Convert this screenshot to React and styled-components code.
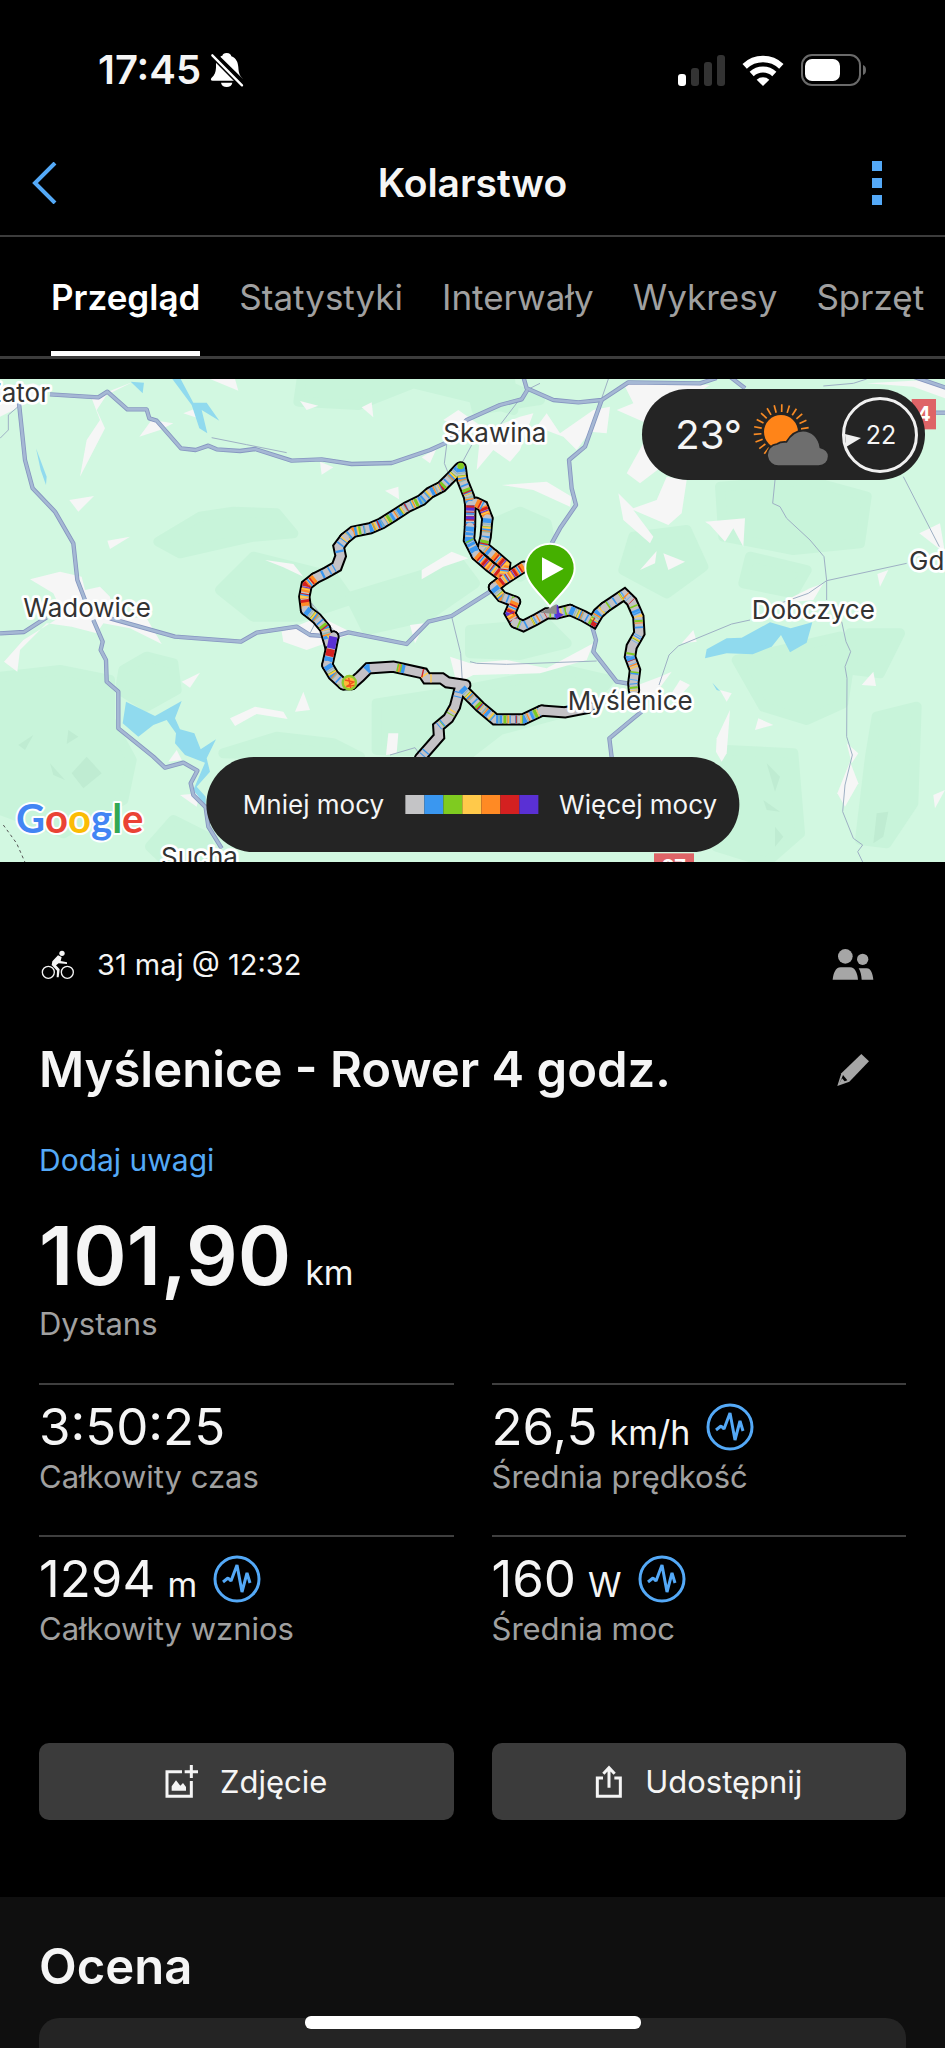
import React, { useState } from 'react';
import styled, { createGlobalStyle } from 'styled-components';

const GlobalStyle = createGlobalStyle`
  * {
    box-sizing: border-box;
  }

  body {
    margin: 0;
    background-color: #000;
    color: #f5f5f5;
    font-family: Inter, 'Liberation Sans', sans-serif;
  }

  button {
    font-family: inherit;
    cursor: pointer;
  }
`;

const Page = styled.div`
  display: flex;
  flex-direction: column;
  height: 100vh;
  overflow: hidden;

  > * {
    flex-shrink: 0;
  }
`;

const StatusBar = styled.div`
  display: flex;
  justify-content: space-between;
  align-items: center;
  padding: 46px 78px 40px 98px;
`;

const StatusGroup = styled.div`
  display: flex;
  align-items: center;
  gap: ${props => props.$gap};
`;

const Clock = styled.span`
  font-size: 40px;
  line-height: 48px;
  font-weight: 600;
`;

const Header = styled.header`
  display: grid;
  grid-template-columns: 1fr auto 1fr;
  align-items: center;
  padding: 0 23px 4px;
  height: 103px;
  border-bottom: 2px solid #3c3c3c;
`;

const HeaderTitle = styled.h1`
  margin: 0;
  font-size: 39px;
  line-height: 48px;
  font-weight: 600;
  text-align: center;
`;

const IconButton = styled.button`
  display: flex;
  padding: 8px;
  border: none;
  background: none;
  color: ${props => props.$color};
`;

const MenuButton = styled(IconButton)`
  justify-self: end;
  margin-right: 32px;
`;

const Tabs = styled.nav`
  display: flex;
  gap: 39px;
  padding: 38px 24px 0 51px;
  overflow: hidden;
  border-bottom: 3px solid #3c3c3c;
`;

const Tab = styled.button`
  padding: 0 0 32px;
  border: none;
  border-bottom: 5px solid ${props => (props.$active ? '#fff' : 'transparent')};
  background: none;
  color: ${props => (props.$active ? '#fff' : '#a0a0a0')};
  font-size: 35px;
  line-height: 44px;
  font-weight: ${props => (props.$active ? 600 : 400)};
  white-space: nowrap;
`;

const MapCard = styled.section`
  position: relative;
  margin-top: 20px;
  overflow: hidden;
`;

const MapSvg = styled.svg`
  display: block;
  width: 100%;
  height: auto;
`;

const Place = styled.text`
  font-family: Inter, sans-serif;
  font-size: 78px;
  fill: #333;
  stroke: #fff;
  stroke-width: 16px;
  stroke-linejoin: round;
  paint-order: stroke;
`;

const Shield = styled.text`
  font-family: Inter, sans-serif;
  font-size: 60px;
  font-weight: 700;
  fill: #fff;
`;

const GoogleLogo = styled.text`
  font-family: Lato, sans-serif;
  font-size: 120px;
  font-weight: 700;
  stroke: #fff;
  stroke-width: 12px;
  stroke-linejoin: round;
  paint-order: stroke;
`;

const Pill = styled.div`
  position: absolute;
  display: flex;
  align-items: center;
  border-radius: 48px;
  background-color: #242424;
`;

const WeatherPill = styled(Pill)`
  top: 10px;
  right: 20px;
  height: 91px;
  padding: 0 7px 0 33px;
`;

const Temperature = styled.span`
  font-size: 40px;
  margin-right: 11px;
`;

const Wind = styled.div`
  position: relative;
  display: flex;
  justify-content: center;
  align-items: center;
  width: 76px;
  height: 76px;
  margin-left: 13px;
  padding-left: 2px;
  border: 3px solid #f0f0f0;
  border-radius: 50%;
  font-size: 25px;

  svg {
    position: absolute;
    left: 0;
    top: 34px;
  }
`;

const LegendPill = styled(Pill)`
  left: 50%;
  bottom: 10px;
  height: 95px;
  padding: 0 22px 0 37px;
  gap: 21px;
  transform: translateX(-50%);
  font-size: 26px;
  white-space: nowrap;
`;

const Scale = styled.div`
  display: flex;
`;

const Swatch = styled.span`
  width: 19px;
  height: 19px;
  background-color: ${props => props.$color};
`;

const Activity = styled.main`
  padding: 79px 39px 77px;
`;

const Row = styled.div`
  display: flex;
  justify-content: space-between;
  align-items: center;
  padding-right: 24px;
`;

const DateText = styled.div`
  display: flex;
  align-items: center;
  gap: 21px;
  height: 40px;
  font-size: 29px;
`;

const Title = styled.h2`
  margin: 0;
  font-size: 49px;
  line-height: 60px;
  font-weight: 600;
`;

const TitleRow = styled(Row)`
  margin-top: 52px;
`;

const NotesLink = styled.a`
  display: block;
  width: fit-content;
  margin-top: 40px;
  color: #54a9f7;
  font-size: 30px;
  line-height: 40px;
  text-decoration: none;
`;

const Distance = styled.div`
  display: flex;
  align-items: baseline;
  gap: 14px;
  margin-top: 28px;
  font-size: 81px;
  line-height: 96px;
  font-weight: 600;
`;

const Label = styled.div`
  color: #a0a0a0;
  font-size: 31px;
  line-height: 40px;
`;

const Unit = styled.span`
  font-size: 34px;
  line-height: 40px;
  font-weight: 400;
`;

const Stats = styled.div`
  display: grid;
  grid-template-columns: 1fr 1fr;
  gap: 38px;
  margin-top: 39px;
`;

const Stat = styled.div`
  padding-top: 12px;
  border-top: 2px solid #3f3f3f;
`;

const StatLine = styled.div`
  display: flex;
  align-items: center;
  gap: 16px;
`;

const Value = styled.div`
  display: flex;
  align-items: baseline;
  gap: 12px;
  font-size: 51px;
  line-height: 60px;
`;

const ChartButton = styled.button`
  display: flex;
  padding: 0;
  border: none;
  background: none;
`;

const Actions = styled.div`
  display: grid;
  grid-template-columns: 1fr 1fr;
  gap: 38px;
  margin-top: 94px;
`;

const ActionButton = styled.button`
  display: flex;
  justify-content: center;
  align-items: center;
  gap: 22px;
  height: 77px;
  border: none;
  border-radius: 10px;
  background-color: #3b3b3b;
  color: #f5f5f5;
  font-size: 31px;
`;

const Rating = styled.section`
  display: flex;
  flex-direction: column;
  flex-grow: 1;
  gap: 21px;
  padding: 40px 39px 0;
  background-color: #0f0f0f;
`;

const RatingCard = styled.div`
  flex: 1;
  min-height: 29px;
  border-radius: 20px 20px 0 0;
  background-color: #242424;
`;

const HomeIndicator = styled.div`
  position: fixed;
  left: 50%;
  bottom: 19px;
  width: 336px;
  height: 13px;
  border-radius: 6px;
  background-color: #fff;
  transform: translateX(-50%);
`;

const tabs = ['Przegląd', 'Statystyki', 'Interwały', 'Wykresy', 'Sprzęt'];

const scale = ['#c4c4c6', '#3a97f0', '#7fcb20', '#ffc94a', '#ff8a24', '#d42020', '#5a30d4'];

const stats = [
  { value: '3:50:25', label: 'Całkowity czas' },
  { value: '26,5', unit: 'km/h', label: 'Średnia prędkość', chart: true },
  { value: '1294', unit: 'm', label: 'Całkowity wznios', chart: true },
  { value: '160', unit: 'W', label: 'Średnia moc', chart: true },
];

// stripes laid over the grey track: [colour, dash pattern, offset]
const calm = [
  ['#3a97f0', '14 38 5 27 3 61', 20],
  ['#5cacf5', '3 19 2 47', 7],
  ['#7fcb20', '6 53 5 41', 50],
  ['#ffc94a', '4 67 3 88', 15],
  ['#ff8a24', '3 131 4 90', 60],
  ['#d42020', '2 187', 90],
];

const mixed = [
  ['#3a97f0', '18 16 10 13 5 10', 4],
  ['#8fb8b0', '5 27 3 19', 16],
  ['#7fcb20', '9 45 4 38', 30],
  ['#ffc94a', '4 33 5 51', 11],
  ['#ff8a24', '4 72 3 59', 40],
  ['#d42020', '3 94 4 120', 22],
];

const hard = [
  ['#ff8a24', '14 12 7 9', 2],
  ['#ffc94a', '4 19 6 27', 13],
  ['#d42020', '9 21 5 13', 20],
  ['#5a30d4', '5 51 3 72', 18],
  ['#3a97f0', '4 39', 25],
];

const tracks = [
  {
    points: '508,55 490,75 455,110 420,128 395,150 350,172 310,198 275,220 240,235 190,245 165,265',
    stripes: mixed,
  },
  { points: '165,265 146,290 152,318 140,350 105,370 75,385', stripes: [['#3a97f0', '7 52 4 11 5 17', -42], ['#ffc94a', '4 300', -2]] },
  { points: '75,385 50,405 43,440 48,480', stripes: hard },
  { points: '48,480 80,505 105,535 115,570 130,560', stripes: mixed },
  { points: '130,560 122,600 112,645', stripes: [['#5a30d4', '36 70', 0], ['#d42020', '22 200', -38], ['#3a97f0', '14 200', -62]] },
  { points: '112,645 130,675 160,703', stripes: mixed },
  { points: '160,703 185,702', stripes: hard },
  { points: '185,702 210,680 235,655 310,650 400,670 410,685 455,685 472,697 526,705', stripes: [['#3a97f0', '13 88 18 300', -60], ['#7fcb20', '5 5 4 300', -155], ['#ff8a24', '5 240', -160], ['#ffc94a', '5 20 4 300', -240], ['#d42020', '4 300', -232]] },
  { points: '512,705 495,770 475,805 445,830 447,860 390,925', stripes: [['#7fcb20', '3 36 3 300', -92], ['#ffc94a', '4 300', -80], ['#3a97f0', '4 10 3 90', -128]] },
  { points: '515,715 570,770 615,808 700,808 755,782', stripes: mixed },
  { points: '755,782 825,787 900,772', stripes: [] },
  { points: '512,52 517,90 537,140 541,165', stripes: mixed },
  { points: '558,158 578,168 592,205', stripes: hard },
  { points: '592,205 587,260 580,290 610,315', stripes: mixed },
  { points: '541,165 540,230', stripes: [['#d42020', '14 6 8 5', 0], ['#5a30d4', '9 17', -8], ['#3a97f0', '6 22', 5]] },
  { points: '540,230 537,270 560,315', stripes: [['#3a97f0', '16 3 9 5', 2], ['#7fcb20', '4 49', 12]] },
  { points: '560,315 600,350 640,380', stripes: hard },
  { points: '610,315 645,345 640,385', stripes: hard },
  { points: '702,350 640,390 612,412', stripes: hard },
  { points: '612,412 635,440 675,455', stripes: mixed },
  { points: '675,455 660,490 676,518', stripes: hard },
  { points: '676,518 700,528 735,510 770,490 800,490 840,480', stripes: calm },
  { points: '840,480 880,498 910,515 925,490 945,472', stripes: mixed },
  { points: '945,472 1003,433 1025,455 1045,500 1048,550 1025,590 1020,620 1035,660 1030,700 1032,722', stripes: calm },
];

const roads = [
  '150,73 295,82 322,65 382,118 440,118 448,145 470,152 543,235 587,240 625,227 650,238 720,243 765,237 875,272 965,268 1055,282 1175,279 1290,240 1335,220 1400,150 1500,105 1565,88 1582,60',
  '57,100 75,270 98,355 165,425 220,520 232,630 255,690',
  '0,790 72,786 140,742',
  '330,745 525,800 723,815 770,788 890,770 930,795 1000,800 1045,787 1220,822 1285,755 1355,738 1470,665 1510,640',
  '280,750 308,815 302,840 318,870 320,935 355,965 355,1075 460,1160 495,1193 550,1178 592,1202 572,1240 580,1275 617,1312 625,1370 665,1435',
  '1570,20 1580,55 1660,90 1735,97 1805,90 1885,37 2100,40 2150,24',
  '1805,90 1755,230 1707,270 1715,355 1728,405 1680,475 1655,520',
  '2190,20 2235,55',
  '2740,20 2840,54',
  '2790,128 2840,128',
  '1775,765 1788,810 1780,845 1850,935 1910,945',
  '1925,1025 1900,1045 1828,1105 1836,1170',
];

const lanes = [
  '60,105 25,135 25,180 0,205',
  '1340,225 1333,280 1345,310',
  '1415,225 1380,290',
  '1355,740 1382,850 1387,935',
  '635,203 740,224 860,248',
  '1170,1155 1245,1133 1260,1155',
  '930,790 950,750 935,700 1000,780',
  '1410,875 1430,880 1520,883 1790,873',
  '1500,165 1580,60 1620,40',
  '1800,100 1825,27',
  '2325,330 2318,400 2340,410 2360,445 2430,510 2472,560 2480,632 2480,690',
  '2480,632 2720,580',
  '2480,632 2425,670 2340,700',
  '2250,750 2195,762 2035,828 2007,855 1977,945',
  '2525,755 2538,815 2552,845 2535,890 2541,925 2540,1100 2557,1155 2535,1245 2528,1325 2560,1405 2588,1425 2573,1445 2590,1480',
  '2710,320 2818,530',
  '2470,48 2560,40 2600,27',
];

const forests = [
  '905,27 895,95 1075,105 1240,40 1425,85 1540,120 1530,27',
  '475,515 600,440 700,425 830,430 880,490 760,500 540,550',
  '660,660 760,560 1000,620 1050,690 900,740 760,740',
  '0,920 180,900 330,930 330,1050 395,1170 370,1290 190,1390 0,1320',
  '370,900 440,860 520,880 530,960 440,1010 360,960',
  '670,1150 830,1100 1000,1120 1080,1160',
  '1050,680 1380,580 1425,640 1280,740 1100,780',
  '1130,1000 1390,960 1700,900 1830,930 1760,1010 1500,1080 1410,1150 1130,1140',
  '1480,460 1560,425 1640,460 1660,560 1560,620 1500,560',
  '1410,780 1640,760 1700,820 1560,855 1410,850',
  '1900,500 2060,480 2110,590 2000,670 1870,600',
  '2160,350 2420,330 2600,380 2580,520 2380,540 2170,500',
  '2210,870 2520,800 2550,870 2530,1000 2420,1050 2290,1010',
  '2180,1140 2380,1150 2400,1390 2300,1477 2150,1430',
  '2630,1040 2750,1010 2740,1300 2660,1420 2580,1410 2610,1160',
  '2550,790 2700,790 2640,910 2560,900',
  '1410,30 1530,50 1620,90 1430,120',
  '2250,560 2420,600 2380,670 2230,640',
  '450,1430 520,1350 620,1400 640,1477 500,1477',
];

const deepForests = [
  '215,1210 260,1160 305,1210 250,1255',
  '55,1125 100,1095 75,1140',
  '205,1080 235,1100 200,1122',
  '150,1180 195,1230 160,1215',
  '2300,1180 2340,1220 2325,1265',
  '2290,1290 2340,1325 2300,1320',
  '2325,1370 2350,1400 2325,1430',
  '2630,1330 2665,1325 2650,1400 2620,1420',
];

const towns = [
  '0,60 100,40 150,60 60,110 0,140',
  '275,85 400,35 320,75 290,120 315,175 240,320 260,210 300,150',
  '418,200 455,150 520,160 480,180',
  '550,130 600,110 595,145',
  '630,27 705,27 715,62',
  '900,93 955,107 920,120',
  '1085,112 1115,97 1120,142',
  '960,275 1000,292 965,314',
  '1265,262 1310,235 1290,280',
  '1155,362 1195,350 1197,388',
  '208,390 282,378 235,425',
  '322,512 390,500 330,537',
  '90,628 180,605 245,620 255,660 300,650 330,680 340,740 440,745 485,822 390,775 310,760 290,790 215,770 140,760 60,840 52,905 12,875 70,810 190,735 160,670',
  '795,570 880,582 910,620 850,592',
  '1265,600 1355,545 1405,565 1330,590 1265,628',
  '845,785 960,740 1060,790 920,840 850,815',
  '1230,765 1275,760 1245,820',
  '690,1045 765,1010 850,1025 863,1047 770,1032 705,1068',
  '885,1025 910,965 930,1020',
  '545,935 600,908 570,953',
  '1165,1090 1195,1090 1190,1150 1158,1155',
  '505,1175 530,1140 545,1170',
  '540,1275 600,1270 590,1310',
  '1330,150 1375,120 1460,180 1560,140 1600,130 1560,240 1530,275 1480,240 1430,300 1440,200',
  '1610,170 1640,130 1680,190 1780,120 1830,110 1820,190 1770,185 1730,240 1690,200',
  '1850,120 1900,100 1870,40 2130,45 2060,90 2080,150 1990,160 1930,220 1940,160',
  '1880,310 1930,220 1985,290 1920,340',
  '1505,345 1640,335 1715,380 1710,410 1600,360',
  '1855,370 1900,415 1970,390 2000,320 2060,330 2045,430 2005,465 1900,420 1960,500 1950,520 1870,450',
  '2115,455 2235,445 2230,530 2200,475 2175,515 2130,465',
  '1920,600 1970,543 1965,580',
  '1990,550 2055,575 2005,600',
  '1350,860 1410,880 1520,870 1640,895 1780,820 1760,870 1620,910 1420,915 1370,940',
  '2045,820 2080,780 2090,815',
  '2340,700 2430,655 2470,640 2440,690',
  '1900,950 1980,920 2015,905 1960,980 1900,1000',
  '2015,970 2040,930 2070,945 2020,1000',
  '2265,1080 2275,1045 2320,1065',
  '2150,1105 2190,1020 2180,1150 2165,1175 2148,1145',
  '2160,960 2195,970 2180,995',
  '2585,945 2620,905 2628,948',
  '2632,612 2665,600 2640,650',
  '2758,490 2820,460 2835,550',
  '2550,1175 2575,1240 2535,1310 2512,1270',
  '2800,1275 2835,1260 2805,1315',
  '2540,1120 2575,1150 2555,1180',
  '2600,40 2780,30 2835,50 2835,85 2740,50',
];

const lakes = [
  '392,35 432,38 428,70',
  '517,27 542,27 580,98 620,98 658,152 605,120 622,190 598,175 575,105',
  '108,235 140,320 138,345 122,300',
  '378,995 465,1038 545,993 525,1045 540,1078 583,1090 602,1138 648,1108 620,1165 630,1205 590,1250 617,1280 617,1308 580,1260 615,1178 555,1155 525,1120 528,1090 500,1050 460,1065 415,1100 368,1060',
  '2115,865 2120,838 2180,805 2225,803 2310,757 2372,775 2437,757 2420,818 2370,847 2343,795 2315,830 2258,853 2180,850',
  '2137,938 2160,963 2150,960',
];

function BellOffIcon() {
  return (
    <svg width="34" height="36" viewBox="0 0 102 108" fill="#fff">
      <path d="M50 3c9 0 13 5 14 10 15 6 20 18 21 33 1 20 5 26 14 35L31 14c2-2 4-3 6-3 2-5 5-8 13-8z" />
      <path d="M18 27 78 86H8c-6 0-7-5-3-9 9-8 12-16 13-30z" />
      <path d="M33 92h34c-1 8-8 13-17 13s-16-5-17-13z" />
      <path d="M7 10 96 100" stroke="#000" strokeWidth="16" />
      <path d="M7 10 96 100" stroke="#fff" strokeWidth="7" strokeLinecap="round" />
    </svg>
  );
}

function SignalIcon() {
  return (
    <svg width="47" height="31" viewBox="0 0 47 31">
      <rect x="0" y="19" width="8" height="12" rx="3" fill="#fff" />
      <rect x="13" y="13" width="8" height="18" rx="3" fill="#333" />
      <rect x="26" y="7" width="8" height="24" rx="3" fill="#333" />
      <rect x="39" y="0" width="8" height="31" rx="3" fill="#333" />
    </svg>
  );
}

function WifiIcon() {
  return (
    <svg width="42" height="31" viewBox="0 0 126 93" fill="none">
      <path d="M8 34A80 80 0 0 1 118 34" stroke="#fff" strokeWidth="19" />
      <path d="M29 57A50 50 0 0 1 97 57" stroke="#fff" strokeWidth="18" />
      <path d="M63 93 44 74a28 28 0 0 1 38 0z" fill="#fff" />
    </svg>
  );
}

function BatteryIcon() {
  return (
    <svg width="66" height="32" viewBox="0 0 66 32">
      <rect x="1" y="1" width="58" height="30" rx="10" fill="none" stroke="#6a6a6a" strokeWidth="2" />
      <rect x="4" y="5" width="35" height="22" rx="7" fill="#fff" />
      <path d="M62 11c4 1 4 9 0 10z" fill="#6a6a6a" />
    </svg>
  );
}

function CyclistIcon() {
  return (
    <svg width="37" height="30" viewBox="0 0 111 90" fill="none" stroke="#f5f5f5">
      <circle cx="28" cy="67" r="18" strokeWidth="4" />
      <circle cx="85" cy="67" r="18" strokeWidth="4" />
      <circle cx="69" cy="10" r="8" fill="#f5f5f5" stroke="none" />
      <path d="M40 34 57 16l11 5-3 12 19 4v5l-25-2-8 6 11 12-3 24h-6l1-20-16-17z" fill="#f5f5f5" stroke="none" />
    </svg>
  );
}

function PeopleIcon() {
  return (
    <svg width="42" height="31" viewBox="0 0 126 93" fill="#a6a6a6">
      <circle cx="40" cy="22" r="22" />
      <circle cx="92" cy="31" r="17" />
      <path d="M2 92c2-18 8-37 24-37h28c16 0 22 19 24 37z" />
      <path d="M80 58h24c14 0 18 18 20 34H89c-1-13-3-25-9-34z" />
    </svg>
  );
}

function PencilIcon() {
  return (
    <svg width="38" height="34" viewBox="0 0 114 102">
      <path d="M76 3 99 25 40 86 4 99 16 61z" fill="#a6a6a6" />
      <path d="M21 66 34 82 11 91z" fill="#000" />
      <path d="M18 76 27 86 8 95z" fill="#a6a6a6" />
    </svg>
  );
}

function PulseIcon() {
  return (
    <svg width="48" height="48" viewBox="0 0 48 48" fill="none" stroke="#54a9f7" strokeWidth="3">
      <circle cx="24" cy="24" r="22" />
      <path d="m10 27 5-4 3 3 6-16 5 27 5-19 3 10" strokeLinejoin="bevel" />
    </svg>
  );
}

function PhotoAddIcon() {
  return (
    <svg width="33" height="33" viewBox="0 0 99 99" fill="none" stroke="#f5f5f5" strokeWidth="9">
      <path d="M51 20H6v74h73V48" />
      <path d="M79 0v39M59 20h40" />
      <path d="M20 77V64l13-18 13 16 8-8 9 12v11z" fill="#f5f5f5" stroke="none" />
    </svg>
  );
}

function ShareIcon() {
  return (
    <svg width="28" height="33" viewBox="0 0 84 99" fill="none" stroke="#f5f5f5" strokeWidth="9">
      <path d="M24 39H7v55h69V39H58" />
      <path d="M42 68V8M25 26 42 8l17 18" />
    </svg>
  );
}

function WeatherIcon() {
  const rays = [128, 143, 159, 175, 191, 207, 223, 239, 255, 271, 287, 303, 319, 335, 351];
  return (
    <svg width="76" height="64" viewBox="0 0 228 192">
      {rays.map(angle => (
        <path key={angle} d="M60 0h23" transform={`translate(85 87) rotate(${angle})`} stroke="#f98b24" strokeWidth="5" />
      ))}
      <circle cx="84" cy="87" r="51" fill="#ff8418" />
      <path
        d="M79 189a31 31 0 0 1-7-66c4-3 13-7 28-6 12-20 28-34 50-34 28 0 48 22 52 50 16 4 25 14 25 27 0 17-13 29-30 29z"
        fill="#6e6e6e"
        stroke="#242424"
        strokeWidth="5"
      />
    </svg>
  );
}

function Track({ points, stripes }) {
  return (
    <g>
      <polyline points={points} stroke="#c4c2c6" strokeWidth="25" strokeLinecap="round" />
      {stripes.map(([color, dash, offset]) => (
        <polyline key={color} points={points} stroke={color} strokeWidth="25" strokeDasharray={dash} strokeDashoffset={offset} />
      ))}
    </g>
  );
}

function RouteMap() {
  return (
    <MapSvg viewBox="0 0 2835 1449" role="img" aria-label="Mapa trasy">
      <rect width="2835" height="1449" fill="#d2f8e1" />
      <g transform="translate(0 -27)">
        {forests.map(points => <polygon key={points} points={points} fill="#c8f4da" stroke="#c8f4da" strokeWidth="30" strokeLinejoin="round" />)}
        {deepForests.map(points => <polygon key={points} points={points} fill="#bfecd2" />)}
        {towns.map(points => <polygon key={points} points={points} fill="#f6f6f6" />)}
        {lakes.map(points => <polygon key={points} points={points} fill="#90daee" />)}
        <g fill="none">
          {lanes.map(points => <polyline key={points} points={points} stroke="#9eb0c4" strokeWidth="3" />)}
          {roads.map(points => <polyline key={points} points={points} stroke="#8696c0" strokeWidth="13" strokeLinejoin="round" />)}
          {roads.map(points => <polyline key={points} points={points} stroke="#a5b8d4" strokeWidth="8" strokeLinejoin="round" />)}
          <polyline points="10,1365 50,1420 75,1477" stroke="#555" strokeWidth="3" strokeDasharray="9 9" />
        </g>
        <rect x="2735" y="87" width="73" height="91" fill="#de6467" />
        <Shield x="2752" y="153">4</Shield>
        <rect x="1962" y="1450" width="120" height="40" fill="#de6467" />
        <Shield x="1985" y="1512">97</Shield>
      </g>
      <g transform="translate(870 213)" fill="none" strokeLinejoin="miter">
        {tracks.map(track => <polyline key={track.points} points={track.points} stroke="#000" strokeWidth="37" strokeLinecap="round" />)}
        {tracks.map(track => <Track key={track.points} {...track} />)}
        <circle cx="178" cy="698" r="20" fill="#ffb938" stroke="#8fcb30" strokeWidth="7" />
        <path d="M165 690l26 6-22 14 24-4M176 684l6 30" stroke="#f0501e" strokeWidth="4" />
        <circle cx="512" cy="48" r="10" fill="#7fcb20" />
        <path d="m790 470 14-6 4 24 14 6-24 14z" fill="#5a30d4" />
        <path d="M750 488 800 462v30z" fill="#8c8c8c" />
        <path
          d="M780 470c-22-32-74-70-74-115a74 74 0 0 1 148 0c0 45-52 83-74 115z"
          fill="#45b000"
          stroke="#fff"
          strokeWidth="6"
        />
        <path d="M756 322v70l65-36z" fill="#fff" />
      </g>
      <g transform="translate(0 -27)">
        <Place x="150" y="97" textAnchor="end">Zator</Place>
        <Place x="70" y="742">Wadowice</Place>
        <Place x="1330" y="216">Skawina</Place>
        <Place x="483" y="1487">Sucha</Place>
        <Place x="2727" y="600">Gdów</Place>
        <Place x="2255" y="747">Dobczyce</Place>
        <Place x="1703" y="1020">Myślenice</Place>
        <GoogleLogo x="48" y="1390">
          <tspan fill="#4285f4">G</tspan>
          <tspan fill="#ea4335">o</tspan>
          <tspan fill="#fbbc05">o</tspan>
          <tspan fill="#4285f4">g</tspan>
          <tspan fill="#34a853">l</tspan>
          <tspan fill="#ea4335">e</tspan>
        </GoogleLogo>
      </g>
    </MapSvg>
  );
}

function App() {
  const [activeTab, setActiveTab] = useState('Przegląd');

  return (
    <Page>
      <GlobalStyle />
      <StatusBar>
        <StatusGroup $gap="9px">
          <Clock>17:45</Clock>
          <BellOffIcon />
        </StatusGroup>
        <StatusGroup $gap="17px">
          <SignalIcon />
          <WifiIcon />
          <BatteryIcon />
        </StatusGroup>
      </StatusBar>

      <Header>
        <IconButton $color="#54a9f7" aria-label="Wstecz">
          <svg width="26" height="42" viewBox="0 0 26 42" fill="none" stroke="currentColor" strokeWidth="4">
            <path d="M24 1 4 21l20 20" />
          </svg>
        </IconButton>
        <HeaderTitle>Kolarstwo</HeaderTitle>
        <MenuButton $color="#54a9f7" aria-label="Więcej opcji">
          <svg width="10" height="44" viewBox="0 0 10 44" fill="currentColor">
            <path d="M0 0h10v10H0zM0 17h10v10H0zM0 34h10v10H0z" />
          </svg>
        </MenuButton>
      </Header>

      <Tabs>
        {tabs.map(tab => (
          <Tab key={tab} $active={tab === activeTab} onClick={() => setActiveTab(tab)}>{tab}</Tab>
        ))}
      </Tabs>

      <MapCard>
        <RouteMap />
        <WeatherPill>
          <Temperature>23°</Temperature>
          <WeatherIcon />
          <Wind>
            <svg width="16" height="14" viewBox="0 0 16 14" fill="#f0f0f0"><path d="M0 0 16 4 1 13z" /></svg>
            22
          </Wind>
        </WeatherPill>
        <LegendPill>
          <span>Mniej mocy</span>
          <Scale>
            {scale.map(color => <Swatch key={color} $color={color} />)}
          </Scale>
          <span>Więcej mocy</span>
        </LegendPill>
      </MapCard>

      <Activity>
        <Row>
          <DateText>
            <CyclistIcon />
            <span>31 maj @ 12:32</span>
          </DateText>
          <IconButton $color="#a6a6a6" aria-label="Znajomi"><PeopleIcon /></IconButton>
        </Row>
        <TitleRow>
          <Title>Myślenice - Rower 4 godz.</Title>
          <IconButton $color="#a6a6a6" aria-label="Edytuj nazwę"><PencilIcon /></IconButton>
        </TitleRow>
        <NotesLink href="#uwagi">Dodaj uwagi</NotesLink>

        <Distance>
          101,90
          <Unit>km</Unit>
        </Distance>
        <Label>Dystans</Label>

        <Stats>
          {stats.map(stat => (
            <Stat key={stat.label}>
              <StatLine>
                <Value>
                  {stat.value}
                  {stat.unit && <Unit>{stat.unit}</Unit>}
                </Value>
                {stat.chart && <ChartButton aria-label={`Wykres: ${stat.label}`}><PulseIcon /></ChartButton>}
              </StatLine>
              <Label>{stat.label}</Label>
            </Stat>
          ))}
        </Stats>

        <Actions>
          <ActionButton><PhotoAddIcon />Zdjęcie</ActionButton>
          <ActionButton><ShareIcon />Udostępnij</ActionButton>
        </Actions>
      </Activity>

      <Rating>
        <Title>Ocena</Title>
        <RatingCard />
      </Rating>
      <HomeIndicator />
    </Page>
  );
}

export default App;
